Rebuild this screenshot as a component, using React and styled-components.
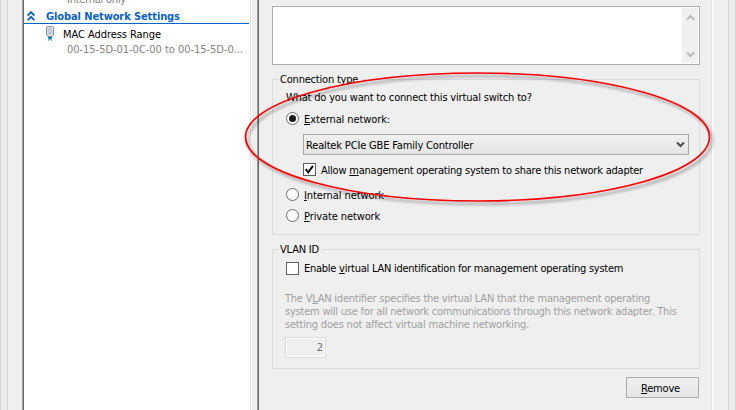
import React from "react";
import styled, { createGlobalStyle } from "styled-components";

const GlobalStyle = createGlobalStyle`
  * { box-sizing: border-box; }
  body { margin: 0; overflow: hidden; }
`;

const Window = styled.div`
  position: relative;
  display: flex;
  width: 736px;
  height: 410px;
  overflow: hidden;
  background: #efefef;
  color: #000;
  font: 11px/13px "DejaVu Sans Condensed", "DejaVu Sans", Tahoma, sans-serif;
`;

const Edge = styled.div`
  flex: none;
  width: 8px;
  background: #ebebeb;
  border: solid #d5d5d5;
  border-width: 0 1px;
`;

const Tree = styled.aside`
  flex: none;
  width: 230px;
  margin-left: 14px;
  background: #fff;
  border-left: 1px solid #a0a0a0;
  border-right: 1px solid #fff;
  box-shadow: inset 1px 0 #696969, inset -1px 0 #e3e3e3;
  padding: 0 2px 0 1px;
`;

const Details = styled.main`
  flex: none;
  display: flex;
  flex-direction: column;
  width: 456px;
  margin-left: 5px;
  margin-right: 15px;
  padding: 6px 12px 0 14px;
  border-left: 1px solid #a0a0a0;
  border-right: 1px solid #fff;
  box-shadow: inset 1px 0 #696969, inset -1px 0 #e3e3e3;
`;

const Text = styled.span`
  white-space: nowrap;
  letter-spacing: ${(p) => p.$track || 0}px;
`;

const Label = styled(Text)`
  padding-top: 2px;
`;

const Key = styled.u`
  text-decoration-thickness: 1px;
  text-underline-offset: 1px;
  text-decoration-skip-ink: none;
`;

const ClippedRow = styled.div`
  display: flex;
  align-items: flex-end;
  height: 6px;
  padding-left: 43px;
  color: #838383;
`;

const SectionRow = styled.div`
  display: flex;
  align-items: center;
  height: 18px;
  padding: 3px 0 0 3px;
  gap: 11px;
  color: #0a62c4;
  font-weight: bold;
  border-bottom: 1px solid #0066cc;
`;

const AdapterRow = styled.div`
  display: flex;
  padding: 2px 0 0 21px;
  gap: 7px;
`;

const AdapterText = styled.div`
  display: flex;
  flex-direction: column;
  padding-top: 2px;
  gap: 2px;
`;

const Address = styled(Text)`
  padding-left: 4px;
  color: #838383;
`;

const Notes = styled.div`
  flex: none;
  display: flex;
  justify-content: flex-end;
  height: 59px;
  padding: 1px;
  background: #fff;
  border: 1px solid #abadb3;
`;

const ScrollBar = styled.div`
  display: flex;
  flex-direction: column;
  justify-content: space-between;
  align-items: center;
  width: 16px;
  padding: 6px 0 5px;
  background: #f0f0f0;
`;

const Group = styled.fieldset`
  flex: none;
  min-width: 0;
  height: ${(p) => p.$height}px;
  margin: ${(p) => p.$gap}px 0 0;
  padding: 0 0 0 13px;
  border: 1px solid #dcdcdc;
`;

const Legend = styled.legend`
  height: 13px;
  margin-left: -7px;
  padding: 0 3px 0 1px;
  white-space: nowrap;
`;

const Line = styled.div`
  display: flex;
  align-items: center;
  height: 13px;
  gap: 5px;
  margin-top: ${(p) => p.$top || 0}px;
  margin-left: ${(p) => p.$indent || 0}px;
`;

const Radio = styled.span`
  display: grid;
  place-items: center;
  flex: none;
  width: 13px;
  height: 13px;
  border: 1px solid #6b6b6b;
  border-radius: 50%;
  background: #fff;
  &::after {
    content: "";
    width: 7px;
    height: 7px;
    border-radius: 50%;
    background: ${(p) => (p.$on ? "#1c1c1c" : "transparent")};
  }
`;

const CheckBox = styled.span`
  display: grid;
  place-items: center;
  flex: none;
  width: 13px;
  height: 13px;
  border: 1px solid #606060;
  background: #fff;
`;

const Combo = styled.div`
  display: flex;
  align-items: center;
  justify-content: space-between;
  width: 386px;
  height: 21px;
  margin: 9px 0 0 17px;
  padding: 0 3px 0 2px;
  border: 1px solid #acacac;
  background: linear-gradient(#f0f0f0, #e5e5e5);
`;

const Hint = styled.p`
  display: flex;
  flex-direction: column;
  margin: 17px 0 0 -1px;
  color: #a0a0a0;
`;

const NumberField = styled.div`
  width: 41px;
  height: 21px;
  margin: 6px 0 0 -1px;
  padding: 3px 2px 0 0;
  border: 1px solid #dadada;
  box-shadow: inset 0 0 0 1px #fff;
  color: #6d6d6d;
  text-align: right;
`;

const Button = styled.button`
  display: flex;
  align-items: center;
  justify-content: center;
  align-self: flex-end;
  width: 73px;
  height: 21px;
  margin: 8px 1px 0 0;
  padding: 0 4px 0 0;
  border: 1px solid #acacac;
  background: linear-gradient(#f0f0f0, #e5e5e5);
  color: #000;
  font: inherit;
`;

const Highlight = styled.svg`
  position: absolute;
  inset: 0;
  pointer-events: none;
`;

const Chevron = ({ up, color }) => (
  <svg width="9" height="7" viewBox="0 0 9 7">
    <path d={up ? "M1 5.5 4.5 2 8 5.5" : "M1 1.5 4.5 5 8 1.5"} fill="none" stroke={color} strokeWidth="2.2" />
  </svg>
);

const CollapseIcon = () => (
  <svg width="8" height="10" viewBox="0 0 8 10">
    <path d="M.6 4.6 4 1.2 7.4 4.6M.6 9.2 4 5.8 7.4 9.2" fill="none" stroke="#0a62c4" strokeWidth="1.9" />
  </svg>
);

const PlugIcon = () => (
  <svg width="11" height="16" viewBox="0 0 11 16">
    <path d="M1.5 1.5Q1.5 .5 2.5 .5H7.5Q8.5 .5 8.5 1.5V8.5L7 10.5H3L1.5 8.5Z" fill="#d8dfe8" stroke="#8491a5" />
    <path d="M4 3.5Q4 2.5 5 2.5T6 3.5V7.5H4Z" fill="#fff" stroke="#8a93a1" strokeWidth=".8" />
    <path d="M3 11H7V13H3Z" fill="#1689b5" />
    <path d="M3.5 12V15M6.5 12V15" stroke="#55bfe0" />
    <path d="M5 11V14" stroke="#0b6f9c" />
  </svg>
);

const hintLines = [
  [<>The V<Key>L</Key>AN identifier specifies the virtual LAN that the management operating</>, -0.23],
  ["system will use for all network communications through this network adapter. This", -0.22],
  ["setting does not affect virtual machine networking.", -0.2],
];

export default function App() {
  return (
    <Window>
      <GlobalStyle />
      <Edge />
      <Tree>
        <ClippedRow><Text $track={-0.25}>Internal only</Text></ClippedRow>
        <SectionRow>
          <CollapseIcon />
          <Text $track={-0.1}>Global Network Settings</Text>
        </SectionRow>
        <AdapterRow>
          <PlugIcon />
          <AdapterText>
            <Text $track={-0.06}>MAC Address Range</Text>
            <Address $track={-0.03}>00-15-5D-01-0C-00 to 00-15-5D-0...</Address>
          </AdapterText>
        </AdapterRow>
      </Tree>
      <Details>
        <Notes>
          <ScrollBar>
            <Chevron up color="#bdbdbd" />
            <Chevron color="#bdbdbd" />
          </ScrollBar>
        </Notes>
        <Group $gap={8} $height={162}>
          <Legend><Text $track={-0.2}>Connection type</Text></Legend>
          <Line $top={5}><Text $track={-0.18}>What do you want to connect this virtual switch to?</Text></Line>
          <Line $top={8}>
            <Radio $on />
            <Label $track={-0.1}><Key>E</Key>xternal network:</Label>
          </Line>
          <Combo>
            <Label $track={-0.16}>Realtek PCIe GBE Family Controller</Label>
            <Chevron color="#505050" />
          </Combo>
          <Line $top={8} $indent={17}>
            <CheckBox>
              <svg width="11" height="11" viewBox="0 0 11 11">
                <path d="M1.7 5.2 4.2 8.3 9 1.8" fill="none" stroke="#111" strokeWidth="2" />
              </svg>
            </CheckBox>
            <Label $track={-0.22}>Allow <Key>m</Key>anagement operating system to share this network adapter</Label>
          </Line>
          <Line $top={12}>
            <Radio />
            <Label $track={-0.09}><Key>I</Key>nternal network</Label>
          </Line>
          <Line $top={8}>
            <Radio />
            <Label $track={-0.11}><Key>P</Key>rivate network</Label>
          </Line>
        </Group>
        <Group $gap={8} $height={126}>
          <Legend><Text $track={-0.2}>VLAN ID</Text></Legend>
          <Line $top={6}>
            <CheckBox />
            <Text $track={-0.25}>Enable <Key>v</Key>irtual LAN identification for management operating system</Text>
          </Line>
          <Hint>
            {hintLines.map(([line, track], i) => <Text key={i} $track={track}>{line}</Text>)}
          </Hint>
          <NumberField>2</NumberField>
        </Group>
        <Button><Label $track={-0.18}><Key>R</Key>emove</Label></Button>
      </Details>
      <Edge />
      <Highlight width="736" height="410" viewBox="0 0 736 410">
        <defs>
          <filter id="shadow" x="-5%" y="-10%" width="112%" height="125%">
            <feDropShadow dx="2.5" dy="3" stdDeviation="1.6" floodColor="#000" floodOpacity="0.42" />
          </filter>
        </defs>
        <ellipse cx="477.5" cy="137" rx="232" ry="64" fill="none" stroke="#fb0505" strokeWidth="1.7" filter="url(#shadow)" />
      </Highlight>
    </Window>
  );
}
